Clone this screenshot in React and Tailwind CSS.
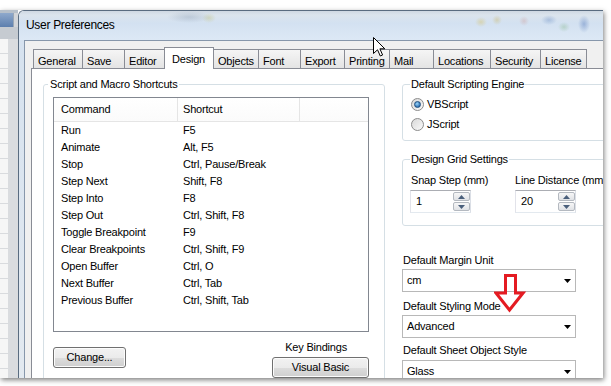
import React from 'react';

const tabs = [
  { label: 'General', w: 'w-[50px]' },
  { label: 'Save', w: 'w-[43px]' },
  { label: 'Editor', w: 'w-[41px]' },
  { label: 'Design', w: 'w-[50px]', active: true },
  { label: 'Objects', w: 'w-[46px]' },
  { label: 'Font', w: 'w-[43px]' },
  { label: 'Export', w: 'w-[45px]' },
  { label: 'Printing', w: 'w-[46px]' },
  { label: 'Mail', w: 'w-[45px]' },
  { label: 'Locations', w: 'w-[58px]' },
  { label: 'Security', w: 'w-[51px]' },
  { label: 'License', w: 'w-[47px]' },
];

const shortcuts = [
  ['Run', 'F5'],
  ['Animate', 'Alt, F5'],
  ['Stop', 'Ctrl, Pause/Break'],
  ['Step Next', 'Shift, F8'],
  ['Step Into', 'F8'],
  ['Step Out', 'Ctrl, Shift, F8'],
  ['Toggle Breakpoint', 'F9'],
  ['Clear Breakpoints', 'Ctrl, Shift, F9'],
  ['Open Buffer', 'Ctrl, O'],
  ['Next Buffer', 'Ctrl, Tab'],
  ['Previous Buffer', 'Ctrl, Shift, Tab'],
];

const Button = ({ children, className }) => (
  <div
    className={`h-[21px] rounded-[3px] border border-[#707070] bg-[linear-gradient(to_bottom,#f2f2f2_0%,#ebebeb_50%,#dddddd_50%,#cfcfcf_100%)] shadow-[inset_0_0_0_1px_#fcfcfc] flex items-center justify-center ${className}`}
  >
    {children}
  </div>
);

const Radio = ({ checked, label }) => (
  <div className="h-[20px] flex items-center">
    <div className="w-[13px] h-[13px] rounded-full border border-[#8c8c8c] bg-gradient-to-br from-[#d8d8d8] to-[#fafafa] flex items-center justify-center">
      {checked && (
        <div className="w-[7px] h-[7px] rounded-full border border-[#1f4f80] bg-[radial-gradient(circle_at_40%_35%,#9bd6fa,#2a6db0_75%)]" />
      )}
    </div>
    <span className="ml-[3px]">{label}</span>
  </div>
);

const Spinner = ({ value }) => (
  <div className="w-[61px] h-[23px] border border-[#abadb3] border-b-[#e3e9ef] border-l-[#e2e3ea] border-r-[#dbdfe6] bg-white flex">
    <div className="flex-1 pl-[5px] flex items-center">{value}</div>
    <div className="flex flex-col gap-[1px] w-[17px] py-px">
      <div className="flex-1 border border-[#b4b9c0] rounded-[2px] bg-gradient-to-b from-[#f7f7f7] to-[#e0e2e6] flex items-center justify-center">
        <svg width="7" height="4" viewBox="0 0 7 4">
          <path d="M0 4 L3.5 0 L7 4Z" fill="#4a5f7b" />
        </svg>
      </div>
      <div className="flex-1 border border-[#b4b9c0] rounded-[2px] bg-gradient-to-b from-[#f7f7f7] to-[#e0e2e6] flex items-center justify-center">
        <svg width="7" height="4" viewBox="0 0 7 4">
          <path d="M0 0 L7 0 L3.5 4Z" fill="#4a5f7b" />
        </svg>
      </div>
    </div>
  </div>
);

const Combo = ({ value }) => (
  <div className="w-[174px] h-[23px] border border-[#b8b8b8] bg-white flex items-center pl-[4px] pr-[4px]">
    <span className="flex-1">{value}</span>
    <svg width="7" height="4" viewBox="0 0 7 4">
      <path d="M0 0 L7 0 L3.5 4Z" fill="#000" />
    </svg>
  </div>
);

export default function App() {
  return (
    <div className="w-[611px] h-[386px] bg-white overflow-hidden pt-[10px] font-['Liberation_Sans',Arial,sans-serif] text-[11px] leading-[13px] tracking-[-0.2px] text-black">
      <div className="relative w-[603px] h-[368px] overflow-hidden flex shadow-[1px_2px_5px_rgba(0,0,0,0.5)]">
        {/* window behind the dialog */}
        <div className="w-[18px] shrink-0 flex flex-col bg-[#d2d5d9]">
          <div className="h-[3px] bg-[#b7c0ca]" />
          <div className="h-[14px] w-[14px] bg-gradient-to-b from-[#8fa9cc] to-[#5d7fae] border-r border-[#9aa7b6]" />
          <div className="h-[12px] bg-[#c6cbd1]" />
          <div className="flex-1 flex">
            <div className="w-[8px] bg-[repeating-linear-gradient(to_bottom,#f6f6f6_0px,#f6f6f6_14px,#d9dbde_14px,#d9dbde_15px)]" />
            <div className="flex-1 bg-[#dadcdf]" />
          </div>
        </div>

        {/* dialog window */}
        <div className="w-[640px] shrink-0 flex flex-col border-l border-t border-[#5a6c80] rounded-tl-[6px] overflow-hidden">
          <div className="h-[29px] shrink-0 pl-[7px] pt-[7px] text-[12px] leading-[14px] tracking-[-0.3px] bg-[radial-gradient(ellipse_22px_6px_at_170px_6px,rgba(120,140,165,0.3),transparent),radial-gradient(ellipse_7px_5px_at_190px_7px,rgba(190,190,110,0.35),transparent),radial-gradient(ellipse_6px_5px_at_462px_11px,rgba(215,190,90,0.4),transparent),radial-gradient(ellipse_5px_5px_at_478px_9px,rgba(200,175,80,0.35),transparent),radial-gradient(ellipse_5px_5px_at_505px_10px,rgba(200,120,110,0.25),transparent),radial-gradient(ellipse_8px_5px_at_530px_9px,rgba(90,130,190,0.35),transparent),radial-gradient(ellipse_6px_5px_at_545px_16px,rgba(110,170,110,0.3),transparent),radial-gradient(ellipse_6px_9px_at_565px_13px,rgba(70,110,180,0.4),transparent),linear-gradient(to_bottom,#cfd8e2_0px,#dbe4ed_4px,#d3e1f1_12px,#dce8f5_28px)]">
            User Preferences
          </div>
          <div className="flex-1 flex pl-[5px] bg-gradient-to-b from-[#d6e2ef] to-[#e4eaf0]">
            <div className="flex-1 flex flex-col border-l border-t border-[#8797ab] bg-[#f0f0f0] pl-[6px] pt-[6px]">
              {/* tab strip */}
              <div className="flex items-end h-[22px] pl-[2px] -mb-px">
                {tabs.map((t, i) =>
                  t.active ? (
                    <div
                      key={t.label}
                      className={`relative z-10 -ml-px h-[22px] ${t.w} bg-white border border-b-0 border-[#898c95] pl-[7px] pt-[5px]`}
                    >
                      {t.label}
                    </div>
                  ) : (
                    <div
                      key={t.label}
                      className={`${i > 0 ? '-ml-px' : ''} h-[20px] ${t.w} border border-b-0 border-[#898c95] bg-gradient-to-b from-[#f5f5f5] to-[#e3e3e3] pl-[4px] pt-[5px]`}
                    >
                      {t.label}
                    </div>
                  )
                )}
              </div>

              {/* tab page */}
              <div className="flex-1 border border-[#898c95] bg-white flex pl-[11px] pt-[9px]">
                {/* left group */}
                <fieldset className="w-[342px] h-[330px] shrink-0 border border-[#d5dfe5] rounded-[3px] pl-[9px] pr-[15px]">
                  <legend className="-ml-[5px] px-[2px]">Script and Macro Shortcuts</legend>
                  <div className="mt-[6px] h-[235px] border border-[#828790] bg-white">
                    <div className="h-[24px] flex border-b border-[#e5e5e5] bg-gradient-to-b from-white to-[#fbfbfb]">
                      <div className="w-[124px] border-r border-[#e5e5e5] pl-[7px] flex items-center">Command</div>
                      <div className="w-[122px] border-r border-[#e5e5e5] pl-[5px] flex items-center">Shortcut</div>
                    </div>
                    {shortcuts.map(([cmd, key]) => (
                      <div key={cmd} className="flex leading-[17px]">
                        <div className="w-[124px] pl-[7px]">{cmd}</div>
                        <div className="pl-[5px]">{key}</div>
                      </div>
                    ))}
                  </div>
                  <div className="flex justify-between">
                    <Button className="mt-[15px] w-[73px]">Change...</Button>
                    <div className="flex flex-col mt-[9px]">
                      <div className="text-right pr-[22px]">Key Bindings</div>
                      <Button className="mt-[3px] w-[97px]">Visual Basic</Button>
                    </div>
                  </div>
                </fieldset>

                {/* right column */}
                <div className="ml-[17px] w-[230px] shrink-0 flex flex-col">
                  <fieldset className="border border-[#d5dfe5] rounded-[3px] pl-[8px] pb-[6px]">
                    <legend className="-ml-[1px] px-[1px]">Default Scripting Engine</legend>
                    <div className="mt-[3px]">
                      <Radio checked label="VBScript" />
                      <Radio label="JScript" />
                    </div>
                  </fieldset>

                  <fieldset className="mt-[12px] border border-[#d5dfe5] rounded-[3px] pl-[8px] pb-[12px]">
                    <legend className="-ml-[1px] px-[1px]">Design Grid Settings</legend>
                    <div className="mt-[8px] flex -ml-px">
                      <div className="w-[105px]">
                        <div className="pl-[1px]">Snap Step (mm)</div>
                        <div className="mt-[3px]">
                          <Spinner value="1" />
                        </div>
                      </div>
                      <div>
                        <div>Line Distance (mm)</div>
                        <div className="mt-[3px]">
                          <Spinner value="20" />
                        </div>
                      </div>
                    </div>
                  </fieldset>

                  <div className="mt-[28px] pl-[1px]">Default Margin Unit</div>
                  <div className="mt-[2px]">
                    <Combo value="cm" />
                  </div>
                  <div className="mt-[8px] pl-[1px]">Default Styling Mode</div>
                  <div className="mt-[2px]">
                    <Combo value="Advanced" />
                  </div>
                  <div className="mt-[6px] pl-[1px]">Default Sheet Object Style</div>
                  <div className="mt-[3px]">
                    <Combo value="Glass" />
                  </div>
                </div>
              </div>
            </div>
          </div>
        </div>

        {/* mouse pointer */}
        <svg className="absolute left-[373px] top-[27px]" width="13" height="20" viewBox="0 0 13 20">
          <path d="M0.5 0.5 L0.5 16.5 L4.5 12.8 L7.3 19 L9.6 18 L6.9 11.8 L11.8 11.8 Z" fill="#fff" stroke="#000" strokeWidth="1" strokeLinejoin="miter" />
        </svg>

        {/* red annotation arrow */}
        <svg className="absolute left-[494px] top-[264px]" width="32" height="40" viewBox="0 0 32 40">
          <path d="M11.5 1.5 L21.5 1.5 L21.5 19 L29 19 L15.5 36 L2 19 L11.5 19 Z" fill="none" stroke="#e41b22" strokeWidth="3" strokeLinejoin="miter" />
        </svg>
      </div>
    </div>
  );
}
